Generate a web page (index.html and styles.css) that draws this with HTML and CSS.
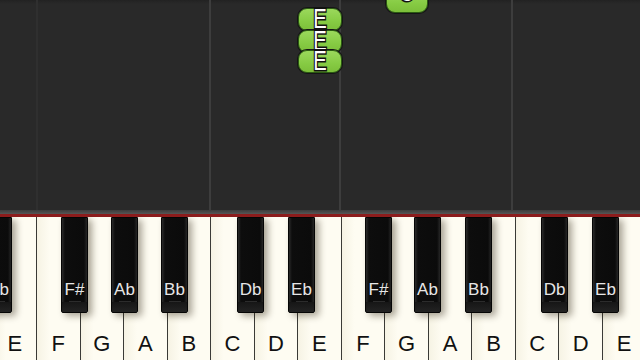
FILE: index.html
```html
<!DOCTYPE html>
<html>
<head>
<meta charset="utf-8">
<link rel="stylesheet" href="styles.css">
</head>
<body>
<div class="app">
  <div class="roll">
    <div class="col c0"></div>
    <div class="col c1 line-soft"></div>
    <div class="col c2 line"></div>
    <div class="col c3 line"></div>
    <div class="col c4 line"></div>
    <div class="note n-g"><span class="lt lt-g">G</span></div>
    <div class="note n-e1"><span class="lt">E</span></div>
    <div class="note n-e2"><span class="lt">E</span></div>
    <div class="note n-e3"><span class="lt">E</span></div>
  </div>
  <div class="rail"></div>
  <div class="redline"></div>
  <div class="keyboard">
    <div class="whites">
      <div class="wk"><span>E</span></div>
      <div class="wk"><span>F</span></div>
      <div class="wk"><span>G</span></div>
      <div class="wk"><span>A</span></div>
      <div class="wk"><span>B</span></div>
      <div class="wk"><span>C</span></div>
      <div class="wk"><span>D</span></div>
      <div class="wk"><span>E</span></div>
      <div class="wk"><span>F</span></div>
      <div class="wk"><span>G</span></div>
      <div class="wk"><span>A</span></div>
      <div class="wk"><span>B</span></div>
      <div class="wk"><span>C</span></div>
      <div class="wk"><span>D</span></div>
      <div class="wk"><span>E</span></div>
    </div>
    <div class="bk b1"><span>Eb</span></div>
    <div class="bk b2"><span>F#</span></div>
    <div class="bk b3"><span>Ab</span></div>
    <div class="bk b4"><span>Bb</span></div>
    <div class="bk b5"><span>Db</span></div>
    <div class="bk b6"><span>Eb</span></div>
    <div class="bk b7"><span>F#</span></div>
    <div class="bk b8"><span>Ab</span></div>
    <div class="bk b9"><span>Bb</span></div>
    <div class="bk b10"><span>Db</span></div>
    <div class="bk b11"><span>Eb</span></div>
  </div>
</div>
</body>
</html>
```
FILE: styles.css
```css
html, body {
  margin: 0;
  padding: 0;
  background: #282828;
}
body {
  width: 640px;
  height: 360px;
  overflow: hidden;
  font-family: "Liberation Sans", Arial, sans-serif;
}
.app {
  width: 640px;
  height: 360px;
  display: flex;
  flex-direction: column;
}
.roll {
  position: relative;
  height: 210px;
  display: flex;
  background: linear-gradient(#222 0px, #292929 4px, #292929 100%);
  overflow: hidden;
}
.col { height: 100%; box-sizing: border-box; }
.c0 { width: 37px; }
.c1 { width: 174px; }
.c2 { width: 131px; }
.c3 { width: 173px; }
.c4 { flex: 1; }
.line-soft { border-left: 2px solid #2f2f2f; margin-left: -1px; }
.line { border-left: 2px solid #3d3d3d; margin-left: -1px; }
.rail {
  height: 4px;
  background: linear-gradient(#3c3c3c, #555);
}
.redline {
  height: 3px;
  background: #8c1c1c;
}
.note {
  position: absolute;
  box-sizing: border-box;
  width: 44px;
  height: 23px;
  border-radius: 9px;
  border: 1.5px solid #2b5a12;
  box-shadow: 0 0 0 1px #151515;
  background: linear-gradient(#9bd85c, #86cb43 60%, #7cbf3a);
  display: flex;
  align-items: center;
  justify-content: center;
  overflow: visible;
}
.n-e1 { left: 298px; top: 8px; }
.n-e2 { left: 298px; top: 30px; }
.n-e3 { left: 298px; top: 50px; }
.n-g { left: 386px; top: -10px; width: 42px; }
.lt {
  font-family: "Liberation Sans", Arial, sans-serif;
  font-size: 27px;
  line-height: 23px;
  color: #fff;
  -webkit-text-stroke: 3px #111;
  paint-order: stroke fill;
  transform: scaleX(0.75);
  display: inline-block;
}
.lt-g { transform: scaleX(0.75) translateY(-9px); }
.keyboard {
  position: relative;
  flex: 1;
  overflow: hidden;
  background: #fdfbef;
}
.whites {
  display: flex;
  height: 100%;
  margin-left: -6.54px;
}
.wk {
  flex: 0 0 43.54px;
  box-sizing: border-box;
  border-right: 1px solid #3a3a36;
  background: linear-gradient(90deg, #f6f3e4, #fefcf2 30%, #fefcf2);
  display: flex;
  align-items: flex-end;
  justify-content: center;
  padding-bottom: 5px;
  font-size: 22px;
  line-height: 22px;
  color: #111;
}
.bk {
  position: absolute;
  top: 0;
  width: 27px;
  height: 96px;
  box-sizing: border-box;
  border: 1px solid #050505;
  border-radius: 0 0 2px 2px;
  background:
    linear-gradient(#2c2c2c, #2c2c2c) 50% 83px / 12px 1px no-repeat,
    linear-gradient(#161616, #242424) 0 84px / 100% 11px no-repeat,
    linear-gradient(90deg, #2a2a2a, #0d0d0d 3px, #0b0b0b 22px, #262626);
  box-shadow: 4px 3px 7px rgba(40, 30, 10, 0.4);
  display: flex;
  justify-content: center;
  padding-top: 63px;
  font-size: 17px;
  line-height: 17px;
  color: #e6e6e6;
  white-space: nowrap;
}
.b1 { left: -15px; }
.b2 { left: 61px; }
.b3 { left: 111px; }
.b4 { left: 161px; }
.b5 { left: 237px; }
.b6 { left: 288px; }
.b7 { left: 365px; }
.b8 { left: 414px; }
.b9 { left: 465px; }
.b10 { left: 541px; }
.b11 { left: 592px; }
```
